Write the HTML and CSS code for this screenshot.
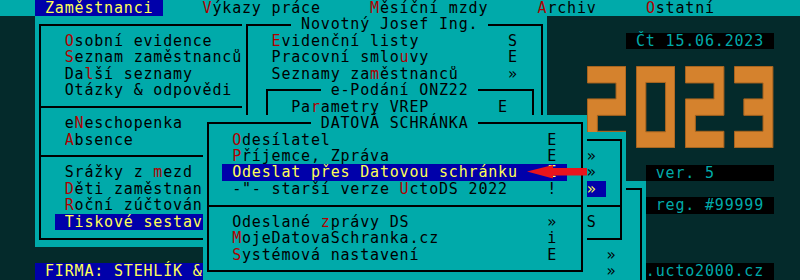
FILE: index.html
```html
<!DOCTYPE html>
<html lang="cs">
<head>
<meta charset="utf-8">
<title>Účto 2000 – Zaměstnanci</title>
<link rel="stylesheet" href="styles.css">
</head>
<body>
<div class="screen">
  <div class="menubar"><span class="sel"> Zaměstnanci </span>    <span class="hk">V</span>ýkazy práce     <span class="hk">M</span>ěsíční mzdy     <span class="hk">A</span>rchiv     <span class="hk">O</span>statní</div>

  <div class="firma"> FIRMA: STEHLÍK &amp; syn, s.r.o.</div>

  <div class="tbox tb-date"> Čt 15.06.2023</div>
  <div class="tbox tb-ver"> ver. 5</div>
  <div class="tbox tb-reg"> reg. #99999</div>
  <div class="tbox tb-web">.ucto2000.cz</div>

  <div class="logo">
    <svg viewBox="0 0 39.4 82.25" width="39.4" height="82.25"><path d="M0.5 0.5H38.9V49.35H10.35V65.3H38.9V81.75H0.5V32.9H29.05V16.95H0.5Z"/></svg>
    <svg viewBox="0 0 39.4 82.25" width="39.4" height="82.25"><path fill-rule="evenodd" d="M0.5 0.5H38.9V81.75H0.5ZM9.85 16.45V65.8H29.55V16.45Z"/></svg>
    <svg viewBox="0 0 39.4 82.25" width="39.4" height="82.25"><path d="M0.5 0.5H38.9V49.35H10.35V65.3H38.9V81.75H0.5V32.9H29.05V16.95H0.5Z"/></svg>
    <svg viewBox="0 0 39.4 82.25" width="39.4" height="82.25"><path d="M0.5 0.5H38.9V81.75H0.5V65.3H29.05V49.35H9.85V32.9H29.05V16.95H0.5Z"/></svg>
  </div>

  <div class="win w1">
    <div class="row"></div>
    <div class="row"><span class="lbl"><span class="hk">O</span>sobní evidence</span></div>
    <div class="row"><span class="lbl"><span class="hk">S</span>eznam zaměstnanců</span></div>
    <div class="row"><span class="lbl">Da<span class="hk">l</span>ší seznamy</span></div>
    <div class="row"><span class="lbl">Otázky &amp; odpovědi</span></div>
    <div class="row sep"></div>
    <div class="row"><span class="lbl">e<span class="hk">N</span>eschopenka</span></div>
    <div class="row"><span class="lbl"><span class="hk">A</span>bsence</span></div>
    <div class="row sep"></div>
    <div class="row"><span class="lbl">Srážky z <span class="hk">m</span>ezd</span></div>
    <div class="row"><span class="lbl"><span class="hk">D</span>ěti zaměstnanců</span></div>
    <div class="row"><span class="lbl"><span class="hk">R</span>oční zúčtování</span></div>
    <div class="row"><span class="bar"><span class="lbl">Tiskové sestavy</span></span></div>
  </div>

  <div class="win w2">
    <div class="row title-row"><span class="title"> Novotný Josef Ing. </span></div>
    <div class="row"><span class="lbl"><span class="hk">E</span>videnční listy</span><span class="key">S</span></div>
    <div class="row"><span class="lbl">Pracovní smlo<span class="hk">u</span>vy</span><span class="key">E</span></div>
    <div class="row"><span class="lbl">Seznamy za<span class="hk">m</span>ěstnanců</span><span class="key">»</span></div>
  </div>

  <div class="win w3">
    <div class="row title-row"><span class="title"> e-Podání ONZ22 </span></div>
    <div class="row"><span class="lbl">Pa<span class="hk">r</span>ametry VREP</span><span class="key">E</span></div>
  </div>

  <div class="win w6">
    <div class="row"></div>
    <div class="row"></div>
    <div class="row"></div>
    <div class="row"></div>
    <div class="row"><span class="lbl"></span><span class="key">»</span></div>
    <div class="row"><span class="lbl"></span><span class="key">»</span></div>
  </div>

  <div class="win w5">
    <div class="row"></div>
    <div class="row"><span class="lbl"></span><span class="key">»</span></div>
    <div class="row"><span class="lbl"></span><span class="key">»</span></div>
    <div class="row"><span class="bar"><span class="lbl"></span><span class="key">»</span></span></div>
    <div class="row sep"></div>
    <div class="row"><span class="lbl"></span><span class="key">S</span></div>
  </div>

  <div class="win w4">
    <div class="row title-row"><span class="title"> DATOVÁ SCHRÁNKA </span></div>
    <div class="row"><span class="lbl"><span class="hk">O</span>desílatel</span><span class="key">E</span></div>
    <div class="row"><span class="lbl"><span class="hk">P</span>říjemce, Zpráva</span><span class="key">E</span></div>
    <div class="row"><span class="bar"><span class="lbl">Odeslat přes Datovou schránku</span><span class="key">E</span></span></div>
    <div class="row"><span class="lbl">-"- starší verze <span class="hk">U</span>ctoDS 2022</span><span class="key">!</span></div>
    <div class="row sep"></div>
    <div class="row"><span class="lbl">Odeslané <span class="hk">z</span>právy DS</span><span class="key">»</span></div>
    <div class="row"><span class="lbl"><span class="hk">M</span>ojeDatovaSchranka.cz</span><span class="key">i</span></div>
    <div class="row"><span class="lbl"><span class="hk">S</span>ystémová nastavení</span><span class="key">E</span></div>
  </div>

  <svg class="arrow" viewBox="0 0 62 16" width="62" height="16"><path d="M1 7.5L27 1V4H61V11.5H27V14.5Z"/></svg>
</div>
</body>
</html>
```

FILE: styles.css
```css
html, body {
  margin: 0;
  background: #042a2b;
}

.screen {
  --cw: 9.85px;
  --ch: 16.45px;
  --x0: 5.6px;
  --teal: #00aaaa;
  --blue: #0000aa;
  --yellow: #ffff55;
  --red: #b00000;
  position: relative;
  width: 800px;
  height: 280px;
  overflow: hidden;
  background: #042a2b;
  color: #000;
  font-family: "DejaVu Sans Mono", monospace;
  font-size: 15px;
  line-height: var(--ch);
  letter-spacing: 0.819px;
}

.hk { color: var(--red); }

.menubar {
  height: var(--ch);
  background: var(--teal);
  padding-left: calc(var(--x0) + 3 * var(--cw));
  white-space: pre;
}
.menubar .sel {
  background: var(--blue);
  color: var(--yellow);
}

.firma {
  position: absolute;
  left: calc(var(--x0) + 3 * var(--cw));
  top: calc(16 * var(--ch));
  width: calc(40 * var(--cw));
  height: var(--ch);
  background: var(--blue);
  color: var(--yellow);
  white-space: pre;
}

.tbox {
  position: absolute;
  left: calc(var(--x0) + var(--c) * var(--cw));
  top: calc(var(--r) * var(--ch));
  width: calc(var(--w) * var(--cw));
  height: var(--ch);
  background: #000;
  color: var(--teal);
  white-space: pre;
}
.tb-date { --c: 63; --r: 2; --w: 15; }
.tb-ver  { --c: 65; --r: 10; --w: 13; }
.tb-reg  { --c: 65; --r: 12; --w: 13; }
.tb-web  { --c: 65; --r: 16; --w: 13; }

.logo {
  position: absolute;
  left: calc(var(--x0) + 59 * var(--cw));
  top: calc(4 * var(--ch));
  display: flex;
  gap: var(--cw);
}
.logo svg { display: block; }
.logo path {
  fill: #d5822d;
  stroke: #a9641f;
  stroke-width: 1;
}

.win {
  position: absolute;
  left: calc(var(--x0) + var(--c) * var(--cw));
  top: calc(var(--r) * var(--ch));
  width: calc(var(--w) * var(--cw));
  height: calc(var(--h) * var(--ch));
  background: var(--teal);
}
.win::before {
  content: "";
  position: absolute;
  left: calc(var(--cw) / 2 - 1px);
  right: calc(var(--cw) / 2 - 1px);
  top: calc(var(--ch) / 2 - 1px);
  bottom: calc(var(--ch) / 2 - 1px);
  border: 2px solid #000;
}

.w1 { --c: 3;  --r: 1;  --w: 30; --h: 14; --ind: 3; --kc: 24; --bw: 24; }
.w2 { --c: 24; --r: 1;  --w: 31; --h: 10; --ind: 3; --kc: 24; --t: 5; }
.w3 { --c: 26; --r: 5;  --w: 28; --h: 6;  --ind: 3; --kc: 21; --t: 6; }
.w4 { --c: 20; --r: 7;  --w: 39; --h: 10; --ind: 3; --kc: 32; --t: 11; --bw: 35; }
.w5 { --c: 45; --r: 8;  --w: 18; --h: 7;  --ind: 3; --kc: 11; --bw: 14; }
.w6 { --c: 47; --r: 11; --w: 18; --h: 8;  --ind: 3; --kc: 11; }

.row {
  position: relative;
  display: flex;
  height: var(--ch);
  padding-left: calc(var(--ind) * var(--cw));
  white-space: pre;
}
.title-row {
  padding-left: calc(var(--t) * var(--cw));
}
.title { background: var(--teal); }

.sep::after {
  content: "";
  position: absolute;
  left: calc(var(--cw) / 2 - 1px);
  right: calc(var(--cw) / 2 - 1px);
  top: calc(var(--ch) / 2 - 1px);
  border-top: 2px solid #000;
}

.lbl {
  flex: 0 0 calc(var(--kc) * var(--cw));
  overflow: hidden;
}
.key { flex: 0 0 var(--cw); }

.bar {
  display: flex;
  box-sizing: border-box;
  width: calc(var(--bw) * var(--cw));
  margin-left: calc(-1 * var(--cw));
  padding-left: var(--cw);
  background: var(--blue);
  color: var(--yellow);
}
.bar .lbl { flex-basis: calc(var(--kc) * var(--cw)); }

.arrow {
  position: absolute;
  left: 526px;
  top: 164px;
}
.arrow path { fill: #e8141c; }
```
